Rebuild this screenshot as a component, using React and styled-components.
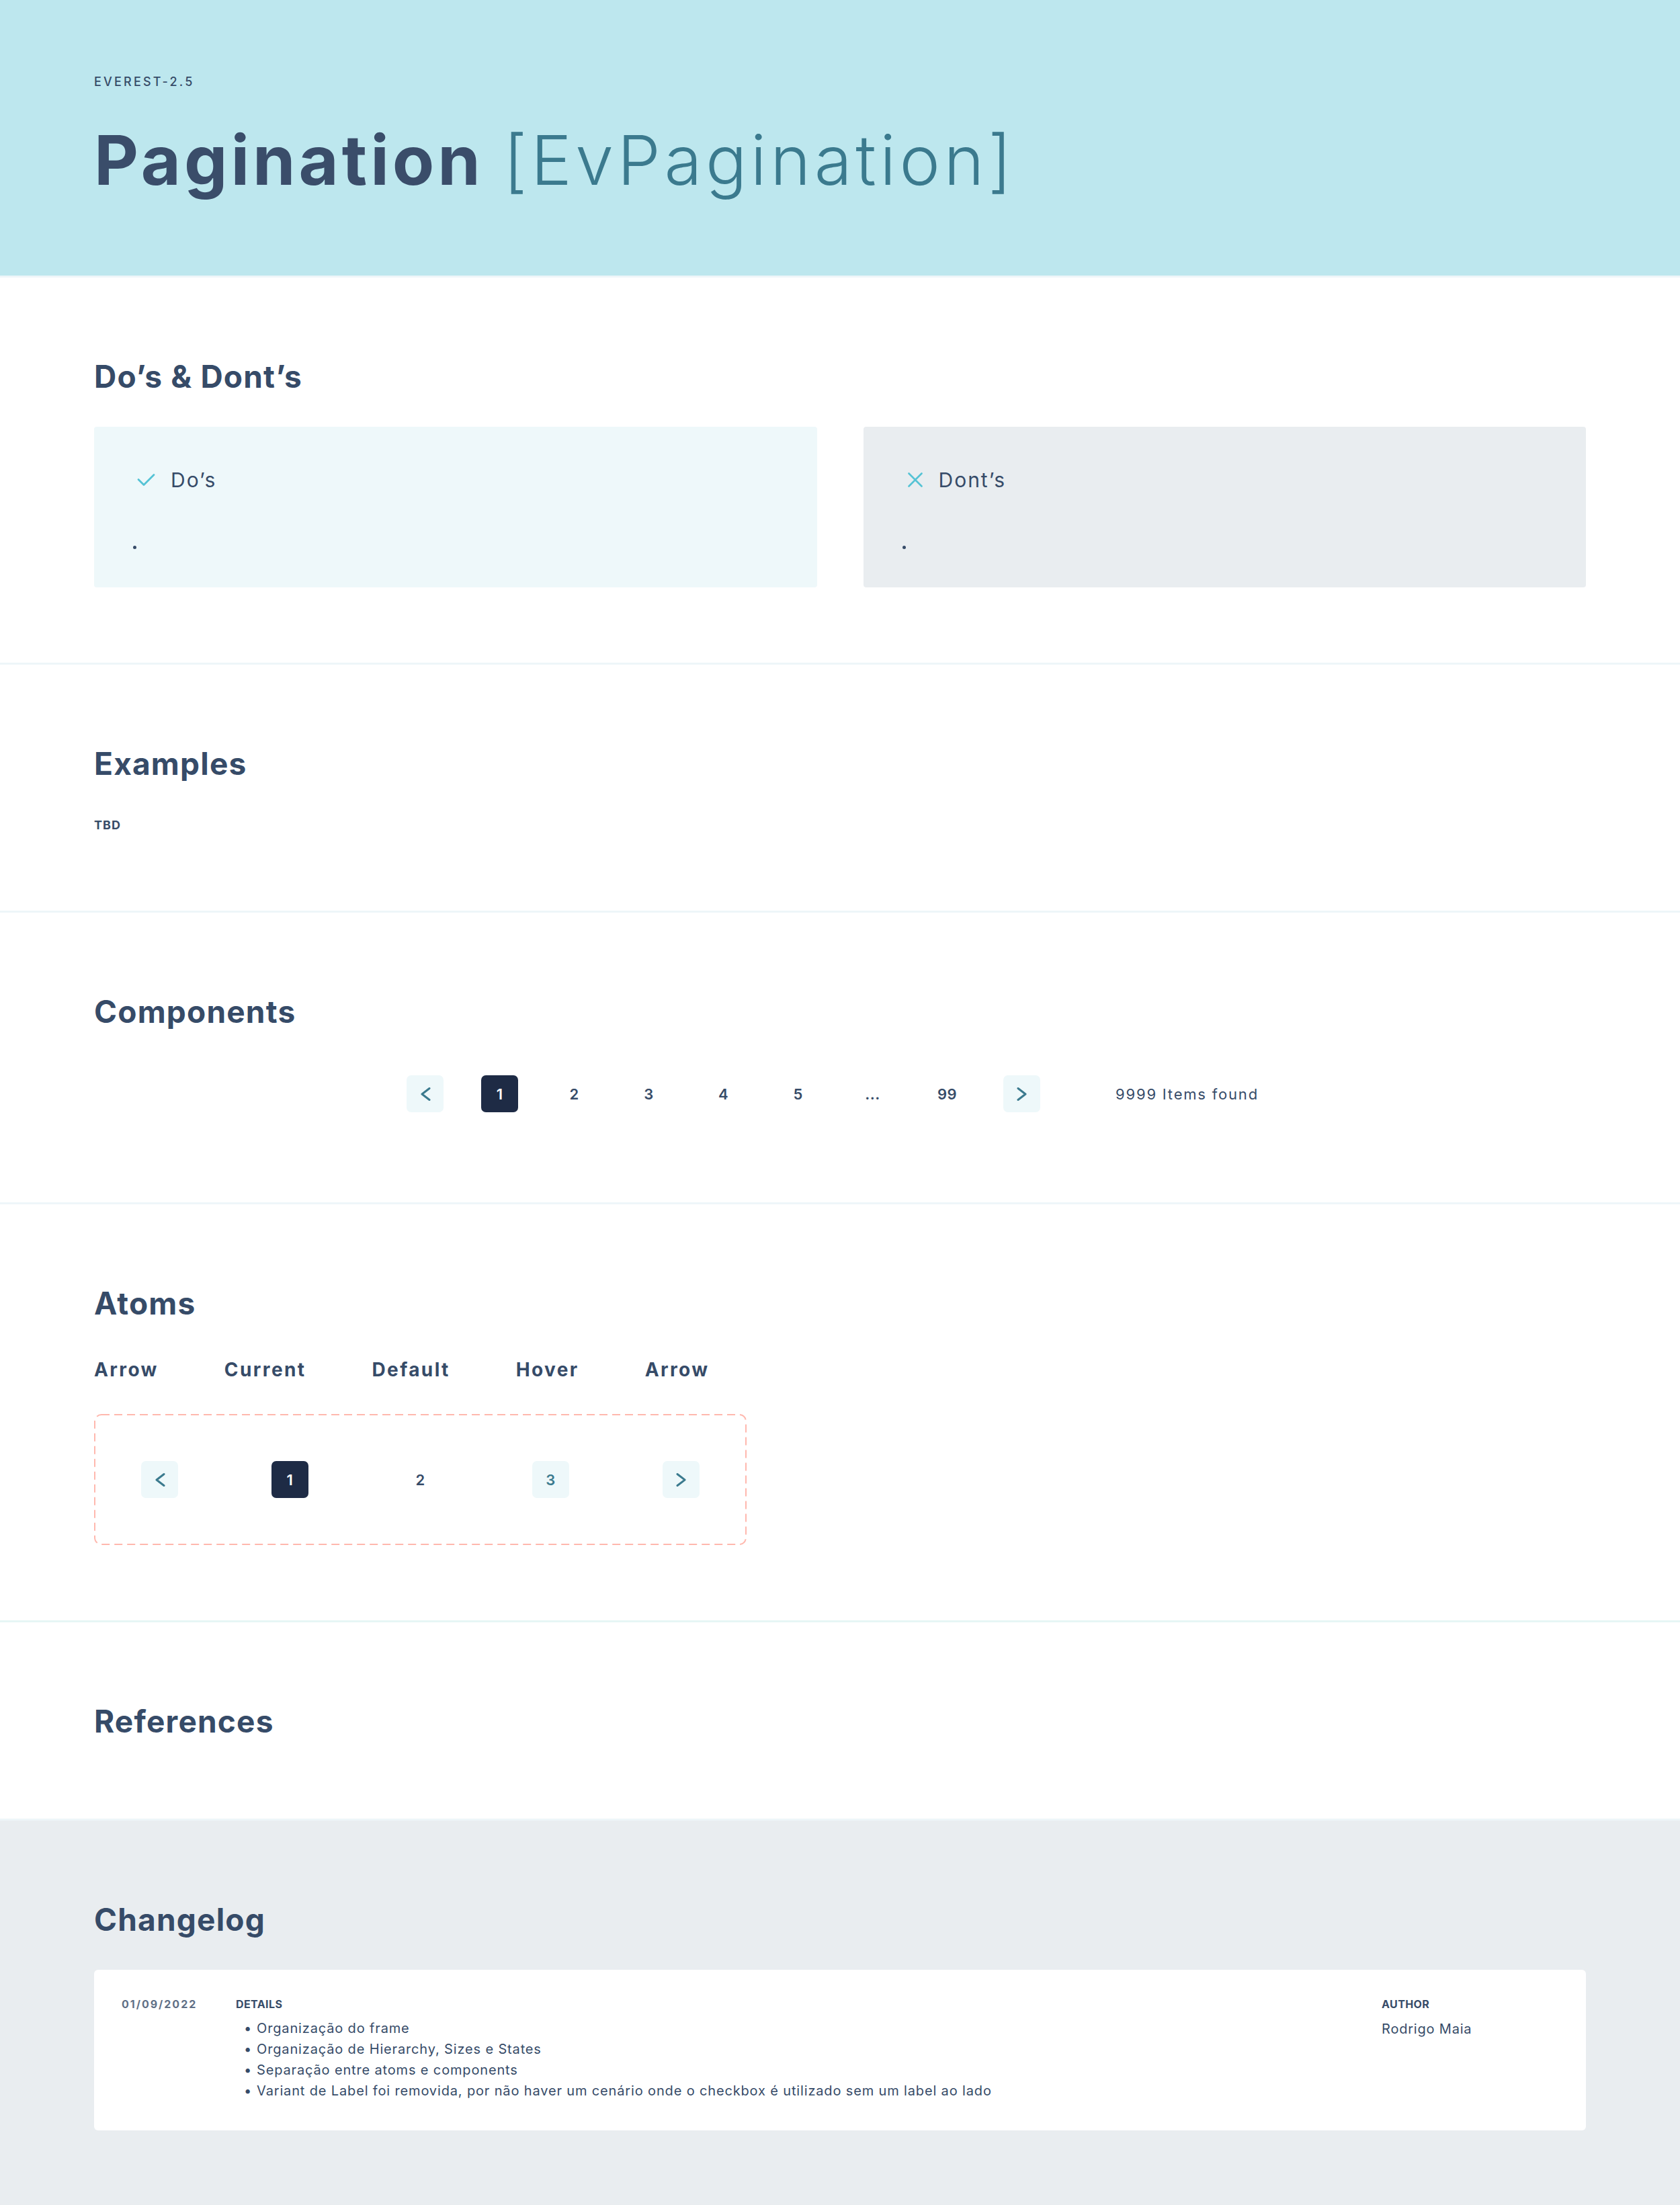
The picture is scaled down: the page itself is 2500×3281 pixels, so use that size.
import React from 'react'
import styled, { createGlobalStyle } from 'styled-components'

const Ink = '#364b68'
const Teal = '#3b7a8e'
const Aqua = '#55c3d5'
const Pale = '#eef8fa'
const Line = '#eef6f9'
const Grey = '#e9edf0'

const GlobalStyle = createGlobalStyle`
    * { box-sizing: border-box; }
    body {
        margin: 0;
        font-family: Inter, "Open Sans", sans-serif;
        color: ${Ink};
        background: #fff;
    }
`

const Header = styled.header`
    height: 413px;
    padding: 111px 140px 0;
    background: #bde7ee;
    border-bottom: 3px solid ${Line};
`

const Kicker = styled.div`
    font-size: 18px;
    line-height: 22px;
    font-weight: 500;
    letter-spacing: 3.2px;
`

const Title = styled.h1`
    margin: 45px 0 0;
    font-size: 102px;
    line-height: 120px;
    font-weight: 700;
    letter-spacing: 5px;
    color: #3a4d6a;

    span {
        font-weight: 300;
        color: ${Teal};
        letter-spacing: 5.5px;
    }
`

const Section = styled.section`
    padding: 119px 140px ${p => p.$bottom || 112}px;
    border-bottom: 3px solid ${p => p.$line || Line};
    background: ${p => p.$bg || '#fff'};
`

const Heading = styled.h2`
    margin: 0;
    font-size: 46px;
    line-height: 56px;
    font-weight: 700;
    letter-spacing: 1.2px;
`

const Cards = styled.div`
    display: grid;
    grid-template-columns: 1fr 1fr;
    gap: 69px;
    margin-top: 47px;
`

const Card = styled.div`
    height: 239px;
    padding: 61px 64px 0;
    border-radius: 4px;
    background: ${p => p.$bg};
`

const CardHead = styled.div`
    display: flex;
    align-items: center;
    gap: ${p => p.$gap}px;
    font-size: 30px;
    line-height: 36px;
    letter-spacing: 2px;

    svg { flex: none; }
`

const EmptyList = styled.ul`
    margin: 80px 0 0;
    padding: 0;
    list-style: none;
`

const Dot = styled.li`
    width: 5px;
    height: 5px;
    margin-left: -6px;
    border-radius: 50%;
    background: ${Ink};
`

const Tbd = styled.div`
    margin-top: 53px;
    font-size: 18px;
    line-height: 22px;
    font-weight: 700;
    letter-spacing: 1px;
`

const Pager = styled.div`
    display: flex;
    align-items: center;
    justify-content: center;
    gap: 56px;
    margin-top: 67px;
    padding-right: 22px;
`

const Cell = styled.div`
    width: 55px;
    height: 55px;
    flex: none;
    display: flex;
    align-items: center;
    justify-content: center;
    border-radius: 7px;
    font-size: 22px;
    font-weight: 600;
    letter-spacing: 0.5px;
    background: ${p => p.$kind === 'current' ? '#1e2b45' : p.$kind === 'soft' ? Pale : 'transparent'};
    color: ${p => p.$kind === 'current' ? '#fff' : p.$kind === 'soft' ? Teal : Ink};
`

const Found = styled.div`
    margin-left: 56px;
    font-size: 22px;
    font-weight: 400;
    letter-spacing: 1.8px;
`

const Labels = styled.div`
    display: flex;
    gap: 98px;
    margin-top: 54px;
    font-size: 28px;
    line-height: 34px;
    font-weight: 700;
    letter-spacing: 2.4px;
`

const Frame = styled.div`
    position: relative;
    display: flex;
    gap: 139px;
    width: 971px;
    height: 195px;
    margin-top: 49px;
    padding: 70px;
`

const DashLine = styled.svg`
    position: absolute;
    inset: 0;
    pointer-events: none;
`

const LogCard = styled.div`
    height: 239px;
    margin-top: 47px;
    padding: 41px 41px 0;
    border-radius: 6px;
    background: #fff;
    display: grid;
    grid-template-columns: 170px 1fr 263px;
`

const Small = styled.div`
    font-size: 16px;
    line-height: 20px;
    font-weight: 700;
    letter-spacing: ${p => p.$wide ? '2px' : '0.4px'};
    color: ${p => p.$muted ? '#5f6f86' : Ink};
`

const Changes = styled.ul`
    margin: 11px 0 0;
    padding: 0 0 0 12px;
    list-style: none;
    font-size: 20px;
    line-height: 31px;
    letter-spacing: 0.85px;

    li::before {
        content: '•';
        display: inline-block;
        width: 19px;
    }
`

const Author = styled.div`
    margin-top: 13px;
    font-size: 20px;
    line-height: 28px;
    letter-spacing: 0.8px;
`

const Chevron = ({ right }) => (
    <svg width="16" height="20" viewBox="0 0 16 20" fill="none">
        <polyline
            points={right ? '2,1.5 13,10 2,18.5' : '14,1.5 3,10 14,18.5'}
            stroke={Teal}
            strokeWidth="3"
            strokeLinecap="round"
            strokeLinejoin="round"
        />
    </svg>
)

const Check = () => (
    <svg width="27" height="20" viewBox="0 0 27 20" fill="none">
        <polyline points="2,9.5 10,17.5 25,2.5" stroke={Aqua} strokeWidth="2.8" strokeLinecap="round" strokeLinejoin="round" />
    </svg>
)

const Cross = () => (
    <svg width="26" height="22" viewBox="0 0 26 22" fill="none">
        <path d="M3.5 1.5 L22.5 20.5 M22.5 1.5 L3.5 20.5" stroke={Aqua} strokeWidth="2.6" strokeLinecap="round" />
    </svg>
)

const pages = ['2', '3', '4', '5', '...', '99']

const changes = [
    'Organização do frame',
    'Organização de Hierarchy, Sizes e States',
    'Separação entre atoms e components',
    'Variant de Label foi removida, por não haver um cenário onde o checkbox é utilizado sem um label ao lado',
]

function App() {
    return (
        <>
            <GlobalStyle />
            <Header>
                <Kicker>EVEREST-2.5</Kicker>
                <Title>Pagination <span>[EvPagination]</span></Title>
            </Header>

            <Section>
                <Heading>Do’s &amp; Dont’s</Heading>
                <Cards>
                    <Card $bg={Pale}>
                        <CardHead $gap={23}><Check /> Do’s</CardHead>
                        <EmptyList><Dot /></EmptyList>
                    </Card>
                    <Card $bg={Grey}>
                        <CardHead $gap={22}><Cross /> Dont’s</CardHead>
                        <EmptyList><Dot /></EmptyList>
                    </Card>
                </Cards>
            </Section>

            <Section $bottom={116}>
                <Heading>Examples</Heading>
                <Tbd>TBD</Tbd>
            </Section>

            <Section $bottom={134}>
                <Heading>Components</Heading>
                <Pager>
                    <Cell $kind="soft"><Chevron /></Cell>
                    <Cell $kind="current">1</Cell>
                    {pages.map(p => <Cell key={p}>{p}</Cell>)}
                    <Cell $kind="soft"><Chevron right /></Cell>
                    <Found>9999 Items found</Found>
                </Pager>
            </Section>

            <Section $line="#e6f6f5">
                <Heading>Atoms</Heading>
                <Labels>
                    <span>Arrow</span>
                    <span>Current</span>
                    <span>Default</span>
                    <span>Hover</span>
                    <span>Arrow</span>
                </Labels>
                <Frame>
                    <DashLine width="971" height="195" viewBox="0 0 971 195">
                        <rect x="1" y="1" width="969" height="193" rx="10" fill="none"
                            stroke="#ffb8ae" strokeWidth="2" strokeDasharray="12 7" />
                    </DashLine>
                    <Cell $kind="soft"><Chevron /></Cell>
                    <Cell $kind="current">1</Cell>
                    <Cell>2</Cell>
                    <Cell $kind="soft">3</Cell>
                    <Cell $kind="soft"><Chevron right /></Cell>
                </Frame>
            </Section>

            <Section $bottom={117}>
                <Heading>References</Heading>
            </Section>

            <Section $bg={Grey} $line="transparent" $bottom={112}>
                <Heading>Changelog</Heading>
                <LogCard>
                    <Small $muted $wide>01/09/2022</Small>
                    <div>
                        <Small>DETAILS</Small>
                        <Changes>
                            {changes.map(c => <li key={c}>{c}</li>)}
                        </Changes>
                    </div>
                    <div>
                        <Small>AUTHOR</Small>
                        <Author>Rodrigo Maia</Author>
                    </div>
                </LogCard>
            </Section>
        </>
    )
}

export default App
